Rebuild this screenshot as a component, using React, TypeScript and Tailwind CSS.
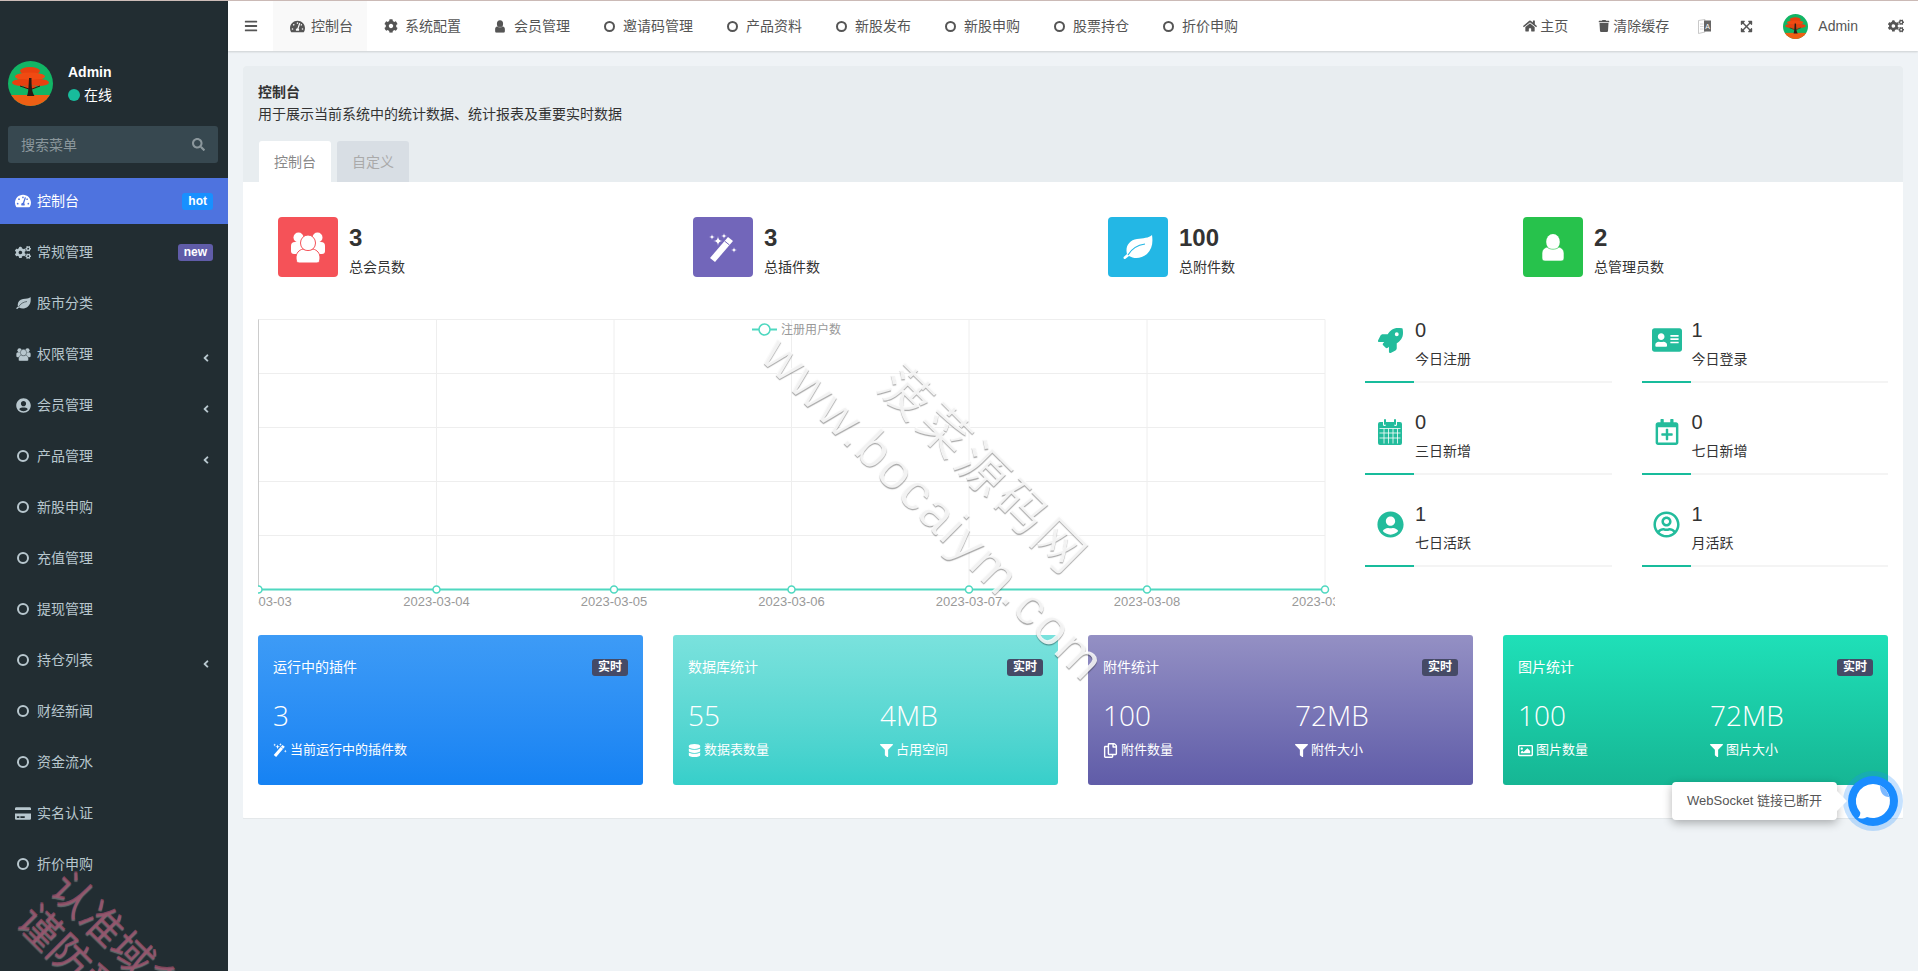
import type { ReactNode } from 'react'
import {
  FaAddressCard,
  FaAngleLeft,
  FaBars,
  FaCog,
  FaCogs,
  FaCreditCard,
  FaDatabase,
  FaExpandArrowsAlt,
  FaFilter,
  FaHome,
  FaRegCalendarPlus,
  FaRegCopy,
  FaRegImage,
  FaRegUserCircle,
  FaRocket,
  FaSearch,
  FaTachometerAlt,
  FaTrash,
  FaUserCircle,
} from 'react-icons/fa'

const FONT = "font-['Liberation_Sans','Noto_Sans_CJK_SC',sans-serif]"

function Avatar({ size, id }: { size: string; id: string }) {
  return (
    <svg viewBox="0 0 45 45" className={size}>
      <defs>
        <clipPath id={id}>
          <circle cx="22.5" cy="22.5" r="22.5" />
        </clipPath>
      </defs>
      <g clipPath={`url(#${id})`}>
        <rect width="45" height="45" fill="#12b565" />
        <rect y="34" width="45" height="11" fill="#ee5f14" />
        <ellipse cx="22" cy="10" rx="10" ry="4" fill="#e8400f" />
        <ellipse cx="22" cy="15.5" rx="15" ry="4" fill="#f04a12" />
        <ellipse cx="14" cy="21.5" rx="10" ry="3.6" fill="#e8400f" />
        <ellipse cx="31" cy="21.5" rx="10" ry="3.6" fill="#e8400f" />
        <ellipse cx="22" cy="26" rx="6" ry="2" fill="#e8400f" />
        <path d="M19 35 C20.5 31 20.5 26 21 17 L23.5 17 C23.5 26 24 31 26.5 35 Z" fill="#2a1a14" />
        <path d="M12 25 L21 28 M32 25 L24 28" stroke="#2a1a14" strokeWidth="1" />
      </g>
    </svg>
  )
}

// ring drawn thicker than the FA5 one, like fa-circle-o
function Ring({ small }: { small?: boolean }) {
  return <span className={`block rounded-full border-current ${small ? 'h-[11px] w-[11px] border-2' : 'h-3 w-3 border-[2.5px]'}`} />
}

function UsersIcon({ gap, size }: { gap: string; size: string }) {
  return (
    <svg viewBox="0 0 34 31" className={size} fill="currentColor">
      <circle cx="7.5" cy="5.5" r="5" />
      <circle cx="26.5" cy="5.5" r="5" />
      <path d="M0 14a4 4 0 0 1 4-4h26a4 4 0 0 1 4 4v5a3 3 0 0 1-3 3H3a3 3 0 0 1-3-3z" />
      <ellipse cx="17" cy="11" rx="7.5" ry="8" stroke={gap} strokeWidth="1" />
      <path d="M5 26c0-5 3-8 7-9 3 2 7 2 10 0 4 1 7 4 7 9 0 3-1 5-3 5H8c-2 0-3-2-3-5z" stroke={gap} strokeWidth="1" />
    </svg>
  )
}

function UserIcon({ gap, size }: { gap: string; size: string }) {
  return (
    <svg viewBox="0 0 22 27" className={size} fill="currentColor">
      <ellipse cx="11" cy="8" rx="6.8" ry="8" />
      <path d="M0 19c0-3 2-5 5-6 3 3 9 3 12 0 3 1 5 3 5 6v5c0 2-1 3-3 3H3c-2 0-3-1-3-3z" stroke={gap} strokeWidth="0.6" />
    </svg>
  )
}

function LeafIcon({ vein, size }: { vein: string; size: string }) {
  return (
    <svg viewBox="0 0 30 24" className={size} fill="currentColor">
      <path d="M29 0c1.2 8 0 14-5 19-6 5-13 5-18 2l-3.5 2.8c-1 .7-2.6-.6-1.8-1.8L4 19C2 12 6 5 14 4c6-.7 12-1 15-4z" />
      <path d="M5 20c4-7 10-10 17-11" fill="none" stroke={vein} strokeWidth="1.2" />
    </svg>
  )
}

function MagicIcon({ notch, size }: { notch: string; size: string }) {
  const star = (x: number, y: number, s: number) =>
    `M${x} ${y - s}Q${x} ${y} ${x + s} ${y}Q${x} ${y} ${x} ${y + s}Q${x} ${y} ${x - s} ${y}Q${x} ${y} ${x} ${y - s}Z`
  return (
    <svg viewBox="0 0 28 29" className={size} fill="currentColor">
      <path d="M1 25 L19 4 L24 8 L6 29 Z" />
      <path d="M15.5 8 L20.5 12" stroke={notch} strokeWidth="1" />
      <path d={star(3, 4, 3)} />
      <path d={star(9, 8, 5)} />
      <path d={star(15, 3, 3)} />
      <path d={star(25, 17, 3)} />
    </svg>
  )
}

function CalendarGrid() {
  return (
    <svg viewBox="0 0 24 26" className="h-[26px] w-[24px]" fill="#23bc9c">
      <path d="M2 3h3v2.5a1.5 1.5 0 0 0 3 0V3h8v2.5a1.5 1.5 0 0 0 3 0V3h3a2 2 0 0 1 2 2v19a2 2 0 0 1-2 2H2a2 2 0 0 1-2-2V5a2 2 0 0 1 2-2z" />
      <rect x="6" y="0" width="2" height="6" rx="1" />
      <rect x="16" y="0" width="2" height="6" rx="1" />
      <g stroke="#fff" strokeWidth="0.8">
        <path d="M1.5 9.5h21M1.5 14h21M1.5 19h21M6 9.5V24.5M10.5 9.5V24.5M15 9.5V24.5M19.5 9.5V24.5" />
      </g>
    </svg>
  )
}

function TranslateIcon() {
  return (
    <svg viewBox="0 0 13 15" className="h-[15px] w-[13px]">
      <path d="M.5 1.5 L7 .5 V13 L.5 14.5 Z" fill="#fff" stroke="#bbb" strokeWidth="0.8" />
      <path d="M2 5h3.5M2 7.5h3.5M2 10h3.5" stroke="#ccc" strokeWidth="0.8" />
      <rect x="6" y="1.5" width="7" height="11" fill="#666" />
      <text x="9.5" y="10" fontSize="7" fill="#fff" textAnchor="middle">
        A
      </text>
    </svg>
  )
}

const menu: { label: string; icon: ReactNode; badge?: 'hot' | 'new'; arrow?: boolean }[] = [
  { label: '控制台', icon: <FaTachometerAlt className="text-base" />, badge: 'hot' },
  { label: '常规管理', icon: <FaCogs className="text-[17px]" />, badge: 'new' },
  { label: '股市分类', icon: <LeafIcon vein="#222d32" size="h-[12px] w-[15px]" /> },
  { label: '权限管理', icon: <UsersIcon gap="#222d32" size="h-[13px] w-[15px]" />, arrow: true },
  { label: '会员管理', icon: <FaUserCircle className="text-[15px]" />, arrow: true },
  { label: '产品管理', icon: <Ring />, arrow: true },
  { label: '新股申购', icon: <Ring /> },
  { label: '充值管理', icon: <Ring /> },
  { label: '提现管理', icon: <Ring /> },
  { label: '持仓列表', icon: <Ring />, arrow: true },
  { label: '财经新闻', icon: <Ring /> },
  { label: '资金流水', icon: <Ring /> },
  { label: '实名认证', icon: <FaCreditCard className="text-[19px]" /> },
  { label: '折价申购', icon: <Ring /> },
]

function Sidebar() {
  return (
    <aside className="relative w-[228px] shrink-0 overflow-hidden bg-[#222d32] pt-[60px]">
      <div className="flex h-[45px] items-center pl-2">
        <Avatar size="h-[45px] w-[45px]" id="avatar-side" />
        <div className="ml-[15px] text-sm text-white">
          <div className="font-bold leading-5">Admin</div>
          <div className="mt-[3px] flex items-center leading-5">
            <span className="mr-1 h-3 w-3 rounded-full bg-[#18bc9c]" />
            在线
          </div>
        </div>
      </div>
      <div className="mt-5 mb-[15px] ml-2 flex h-[37px] w-[210px] items-center justify-between rounded-[3px] bg-[#374850] pr-[13px] pl-[13px] text-sm text-[#8b979c]">
        搜索菜单
        <FaSearch className="text-[13px]" />
      </div>
      <ul>
        {menu.map((item, i) => (
          <li
            key={item.label}
            className={`mb-[5px] flex h-[46px] items-center pr-[15px] pl-[15px] text-sm ${
              i === 0 ? 'bg-[#4e73df] text-white' : 'text-[#b8c7ce]'
            }`}
          >
            <span className="flex w-4 shrink-0 justify-center">{item.icon}</span>
            <span className="ml-[6px] flex-1">{item.label}</span>
            {item.badge === 'hot' && (
              <span className="rounded-[3px] bg-[#1890ff] px-[6px] text-xs leading-[17px] font-bold text-white">hot</span>
            )}
            {item.badge === 'new' && (
              <span className="rounded-[3px] bg-[#605ca8] px-[6px] text-xs leading-[17px] font-bold text-white">new</span>
            )}
            {item.arrow && <FaAngleLeft className="mt-2 mr-[1px] text-xs" />}
          </li>
        ))}
      </ul>
      <div className="pointer-events-none absolute top-[955px] left-[100px] w-[200px] -translate-x-1/2 -translate-y-1/2 rotate-45 text-center text-[42px] leading-[46px] whitespace-nowrap text-[#a8506e]/70 [text-shadow:1px_1px_1px_rgba(200,200,200,.4)]">
        认准域名
        <br />
        谨防受骗
      </div>
    </aside>
  )
}

const topNav: { label: string; icon: ReactNode }[] = [
  { label: '控制台', icon: <FaTachometerAlt className="text-[15px]" /> },
  { label: '系统配置', icon: <FaCog /> },
  { label: '会员管理', icon: <UserIcon gap="#fff" size="h-[13px] w-[10px]" /> },
  { label: '邀请码管理', icon: <Ring small /> },
  { label: '产品资料', icon: <Ring small /> },
  { label: '新股发布', icon: <Ring small /> },
  { label: '新股申购', icon: <Ring small /> },
  { label: '股票持仓', icon: <Ring small /> },
  { label: '折价申购', icon: <Ring small /> },
]

function Header() {
  return (
    <header className="relative z-10 flex h-[50px] shrink-0 items-center bg-white text-sm text-[#555] shadow-[0_1px_2px_rgba(0,0,0,.15)]">
      <div className="flex h-full w-[45px] items-center justify-center">
        <FaBars className="text-sm" />
      </div>
      {topNav.map((item, i) => (
        <div key={item.label} className={`flex h-full items-center pl-[15px] ${i === 0 ? 'bg-[#f9f9f9] pr-[14px]' : 'pr-[15px]'}`}>
          <span className="flex w-[18px] justify-center text-sm">{item.icon}</span>
          <span className="ml-[5px]">{item.label}</span>
        </div>
      ))}
      <div className="ml-auto flex h-full items-center pr-[14px]">
        <div className="flex items-center px-[15px]">
          <FaHome className="mr-[3px] text-sm" />
          主页
        </div>
        <div className="flex items-center px-[15px]">
          <FaTrash className="mr-[3px] text-xs" />
          清除缓存
        </div>
        <div className="flex items-center px-[14px]">
          <TranslateIcon />
        </div>
        <div className="flex items-center px-[15px]">
          <FaExpandArrowsAlt className="text-[13px]" />
        </div>
        <div className="flex items-center px-[15px]">
          <Avatar size="h-[25px] w-[25px]" id="avatar-top" />
          <span className="ml-[10px]">Admin</span>
        </div>
        <div className="pl-[15px]">
          <FaCogs className="text-base" />
        </div>
      </div>
    </header>
  )
}

const totals = [
  { value: '3', label: '总会员数', color: 'bg-[#f55258]', icon: <UsersIcon gap="#f55258" size="h-[31px] w-[34px]" /> },
  { value: '3', label: '总插件数', color: 'bg-[#7266ba]', icon: <MagicIcon notch="#7266ba" size="h-[29px] w-[28px]" /> },
  { value: '100', label: '总附件数', color: 'bg-[#23b7e5]', icon: <LeafIcon vein="#23b7e5" size="h-[24px] w-[30px]" /> },
  { value: '2', label: '总管理员数', color: 'bg-[#27c24c]', icon: <UserIcon gap="#27c24c" size="h-[27px] w-[22px]" /> },
]

function Totals() {
  return (
    <div className="grid grid-cols-4 gap-[30px]">
      {totals.map((t) => (
        <div key={t.label} className="flex pl-5">
          <div className={`flex h-[60px] w-[60px] items-center justify-center rounded-[4px] text-white ${t.color}`}>{t.icon}</div>
          <div className="ml-[11px]">
            <div className="mt-1 text-2xl leading-[34px] font-bold text-[#333]">{t.value}</div>
            <div className="mt-[2px] text-sm leading-5 text-[#333]">{t.label}</div>
          </div>
        </div>
      ))}
    </div>
  )
}

function Chart() {
  const xs = [0.5, 178.5, 356, 533.5, 711, 889, 1067]
  const ys = [9.5, 63.5, 117.5, 171.5, 225.5]
  const dates = ['2023-03-03', '2023-03-04', '2023-03-05', '2023-03-06', '2023-03-07', '2023-03-08', '2023-03-09']
  return (
    <svg width="1077" height="300" viewBox="0 0 1077 300" className="shrink-0 overflow-hidden">
      {ys.map((y) => (
        <line key={y} x1="0" x2="1067" y1={y} y2={y} stroke="#eeeeee" />
      ))}
      {xs.slice(1).map((x) => (
        <line key={x} x1={x} x2={x} y1="9.5" y2="279" stroke="#eeeeee" />
      ))}
      <line x1="0.5" x2="0.5" y1="9.5" y2="279" stroke="#cccccc" />
      <line x1="0" x2="1067" y1="279.5" y2="279.5" stroke="#4fd8c0" strokeWidth="2" />
      {xs.map((x) => (
        <circle key={x} cx={x} cy="279.5" r="3.5" fill="#fff" stroke="#4fd8c0" strokeWidth="1.5" />
      ))}
      {dates.map((d, i) => (
        <text key={d} x={xs[i]} y="296" textAnchor="middle" fontSize="13" fill="#999">
          {d}
        </text>
      ))}
      <line x1="494" x2="519" y1="19.5" y2="19.5" stroke="#4fd8c0" strokeWidth="2" />
      <circle cx="506.5" cy="19.5" r="5.5" fill="#fff" stroke="#4fd8c0" strokeWidth="1.5" />
      <text x="523" y="23.5" fontSize="12" fill="#999">
        注册用户数
      </text>
    </svg>
  )
}

const quick: { value: string; label: string; icon: ReactNode }[] = [
  { value: '0', label: '今日注册', icon: <FaRocket className="text-[25px]" /> },
  { value: '1', label: '今日登录', icon: <FaAddressCard className="text-[30px]" /> },
  { value: '0', label: '三日新增', icon: <CalendarGrid /> },
  { value: '0', label: '七日新增', icon: <FaRegCalendarPlus className="text-[26px]" /> },
  { value: '1', label: '七日活跃', icon: <FaUserCircle className="text-[27px]" /> },
  { value: '1', label: '月活跃', icon: <FaRegUserCircle className="text-[27px]" /> },
]

function QuickStats() {
  return (
    <div className="grid flex-1 grid-cols-2 gap-x-[30px] gap-y-[19px] self-start">
      {quick.map((q) => (
        <div key={q.label}>
          <div className="flex h-[71px] pt-[6px]">
            <div className="flex h-[46px] w-[50px] shrink-0 items-center justify-center pt-[2px] text-[#23bc9c]">{q.icon}</div>
            <div>
              <div className="text-xl leading-7 text-[#333]">{q.value}</div>
              <div className="mt-[5px] text-sm leading-5 text-[#333]">{q.label}</div>
            </div>
          </div>
          <div className="flex h-[2px] bg-[#f4f4f4]">
            <div className="w-[49px] bg-[#18bc9c]" />
          </div>
        </div>
      ))}
    </div>
  )
}

const cards: { title: string; bg: string; cols: { value: string; label: string; icon: ReactNode }[] }[] = [
  {
    title: '运行中的插件',
    bg: 'from-[#3d9bf6] to-[#1582f3]',
    cols: [{ value: '3', label: '当前运行中的插件数', icon: <MagicIcon notch="#2a8ef4" size="h-[14px] w-[14px]" /> }],
  },
  {
    title: '数据库统计',
    bg: 'from-[#7ae2dd] to-[#36cfca]',
    cols: [
      { value: '55', label: '数据表数量', icon: <FaDatabase className="text-[13px]" /> },
      { value: '4MB', label: '占用空间', icon: <FaFilter className="text-[13px]" /> },
    ],
  },
  {
    title: '附件统计',
    bg: 'from-[#9490c4] to-[#605ca8]',
    cols: [
      { value: '100', label: '附件数量', icon: <FaRegCopy className="text-[15px]" /> },
      { value: '72MB', label: '附件大小', icon: <FaFilter className="text-[13px]" /> },
    ],
  },
  {
    title: '图片统计',
    bg: 'from-[#1fe0b8] to-[#16b694]',
    cols: [
      { value: '100', label: '图片数量', icon: <FaRegImage className="text-[15px]" /> },
      { value: '72MB', label: '图片大小', icon: <FaFilter className="text-[13px]" /> },
    ],
  },
]

function Cards() {
  return (
    <div className="mt-[25px] grid grid-cols-4 gap-[30px]">
      {cards.map((c) => (
        <div key={c.title} className={`h-[150px] rounded-[3px] bg-gradient-to-b px-[15px] pt-6 text-white ${c.bg}`}>
          <div className="flex items-center justify-between">
            <span className="text-sm leading-[17px]">{c.title}</span>
            <span className="rounded-[3px] bg-[#454a66] px-[6px] text-xs leading-[17px] font-bold">实时</span>
          </div>
          <div className="mt-[21px] grid grid-cols-[192px_1fr]">
            {c.cols.map((col) => (
              <div key={col.label}>
                <div className="font-['Open_Sans','Liberation_Sans',sans-serif] text-[28px] leading-[36px] font-light">{col.value}</div>
                <div className="mt-[7px] flex items-center text-[13px] leading-5">
                  <span className="mr-[3px]">{col.icon}</span>
                  {col.label}
                </div>
              </div>
            ))}
          </div>
        </div>
      ))}
    </div>
  )
}

function ChatNotice() {
  return (
    <div className="absolute top-[770px] left-[1444px] flex items-center">
      <div className="relative flex h-[38px] w-[165px] items-center justify-center rounded-[4px] bg-white text-[13px] text-[#555] shadow-[0_3px_10px_rgba(0,0,0,.3)]">
        WebSocket 链接已断开
        <span className="absolute top-[12px] right-[-7px] h-[14px] w-[14px] rotate-45 bg-white" />
      </div>
      <svg viewBox="0 0 60 60" className="ml-[6px] h-[60px] w-[60px]">
        <circle cx="30" cy="30" r="30" fill="#1a8cff" opacity="0.25" />
        <circle cx="30" cy="30" r="25" fill="#1a8cff" />
        <path d="M30 13a17 17 0 1 1-6 32.9c-3 1.6-6 1.8-9 1.1 1.6-1.6 2.4-3.4 2.3-5.6A17 17 0 0 1 30 13z" fill="#fff" />
        <path d="M37 14.5a17 17 0 0 1 9.3 11.5c-5 .5-9.6-4-9.3-11.5z" fill="#7db9ff" />
      </svg>
    </div>
  )
}

export default function App() {
  return (
    <div className={`relative flex h-screen flex-col overflow-hidden bg-[#eff3f6] ${FONT}`}>
      <div className="h-px shrink-0 bg-[#cdbcb8]" />
      <div className="flex min-h-0 flex-1">
        <Sidebar />
        <div className="relative min-w-0 flex-1">
          <Header />
          <main className="px-[15px] pt-[15px]">
            <div className="rounded-[3px] bg-white">
              <div className="h-[116px] rounded-t-[3px] bg-[#e8edf0] pt-4 pl-[15px] text-sm text-[#333]">
                <div className="leading-5 font-bold">控制台</div>
                <div className="mt-[2px] leading-5">用于展示当前系统中的统计数据、统计报表及重要实时数据</div>
                <div className="mt-[17px] ml-px flex gap-[6px]">
                  <div className="flex h-[41px] w-[72px] items-center justify-center rounded-t-[3px] bg-white text-[#888]">控制台</div>
                  <div className="flex h-[41px] w-[72px] items-center justify-center rounded-t-[3px] bg-[#d8dee4] text-[#aaa]">自定义</div>
                </div>
              </div>
              <div className="border-b border-[#e4e8ea] px-[15px] pt-[35px] pb-[33px]">
                <Totals />
                <div className="mt-[33px] flex gap-[30px]">
                  <Chart />
                  <QuickStats />
                </div>
                <Cards />
              </div>
            </div>
          </main>
          <ChatNotice />
          <div className="pointer-events-none absolute top-[507px] left-[706px] -translate-x-1/2 -translate-y-1/2 rotate-45 text-[52px] tracking-[2px] whitespace-nowrap text-white/85 [text-shadow:1px_1px_1px_rgba(0,0,0,.35)]">
            www.bocaiym.com
          </div>
          <div className="pointer-events-none absolute top-[470px] left-[755px] -translate-x-1/2 -translate-y-1/2 rotate-45 text-[50px] tracking-[4px] whitespace-nowrap text-white/85 [text-shadow:1px_1px_1px_rgba(0,0,0,.35)]">
            菠菜源码网
          </div>
        </div>
      </div>
    </div>
  )
}
